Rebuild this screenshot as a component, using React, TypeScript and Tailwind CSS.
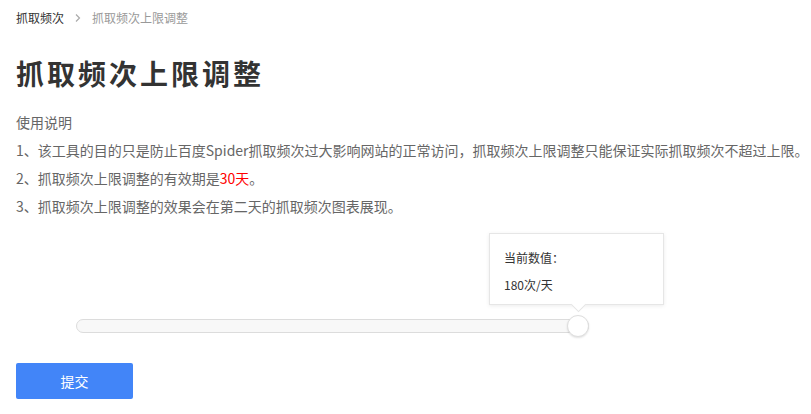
import React from "react";

// Crawl-frequency limit page: breadcrumb, title, notes, slider and submit button
const font = "font-['Microsoft_YaHei','Noto_Sans_CJK_SC',sans-serif]";

const notes = [
  <>1、该工具的目的只是防止百度Spider抓取频次过大影响网站的正常访问，抓取频次上限调整只能保证实际抓取频次不超过上限。</>,
  <>
    2、抓取频次上限调整的有效期是<span className="text-[#ff0000]">30天</span>。
  </>,
  <>3、抓取频次上限调整的效果会在第二天的抓取频次图表展现。</>,
];

function RangeSlider({ value, max }: { value: number; max: number }) {
  const pct = (value / max) * 100;
  return (
    <div className="relative ml-[60px] w-[513px] h-[14px]">
      <div className="h-[14px] rounded-full border border-[#dcdcdc] bg-[#f8f8f8]" />
      <div
        className="absolute top-1/2 -translate-y-1/2 -translate-x-full"
        style={{ left: `${pct}%` }}
      >
        <div className="relative">
          <div className="w-[22px] h-[22px] rounded-full bg-white border border-[#dedede] shadow-[0_1px_2px_rgba(0,0,0,0.12)]" />
          <div className="absolute bottom-[32px] left-[11px] -translate-x-[89px] w-[175px] h-[72px] bg-white border border-[#e6e6e6] shadow-[0_1px_4px_rgba(0,0,0,0.08)] px-[14px] pt-[15px] text-xs text-[#333]">
            <div className="leading-[18px]">当前数值：</div>
            <div className="leading-[18px] mt-[9px]">{value}次/天</div>
            <div className="absolute -bottom-[6px] left-[83px] w-[11px] h-[11px] rotate-45 bg-white border-r border-b border-[#e6e6e6]" />
          </div>
        </div>
      </div>
    </div>
  );
}

export default function App() {
  return (
    <div className={`${font} w-[811px] h-[414px] bg-white pl-4 overflow-hidden`}>
      <div className="flex items-center pt-[10px] text-xs leading-4">
        <span className="text-[#333]">抓取频次</span>
        <span className="mx-[10px] text-[#b0b0b0]">
          <svg width="8" height="10" viewBox="0 0 8 10" fill="none">
            <path d="M2 1.5 L5.5 5 L2 8.5" stroke="#aaa" strokeWidth="1.2" />
          </svg>
        </span>
        <span className="text-[#999]">抓取频次上限调整</span>
      </div>

      <h1 className="mt-[27px] text-[28px] leading-[40px] font-bold tracking-[3px] text-[#333]">
        抓取频次上限调整
      </h1>

      <div className="mt-[15px] text-sm leading-[28px] text-[#666] whitespace-nowrap">
        <div>使用说明</div>
        {notes.map((n, i) => (
          <div key={i}>{n}</div>
        ))}
      </div>

      <div className="mt-[99px]">
        <RangeSlider value={180} max={180} />
      </div>

      <button className="mt-[30px] w-[117px] h-[36px] rounded-[2px] bg-[#4285f8] text-white text-sm">
        提交
      </button>
    </div>
  );
}
